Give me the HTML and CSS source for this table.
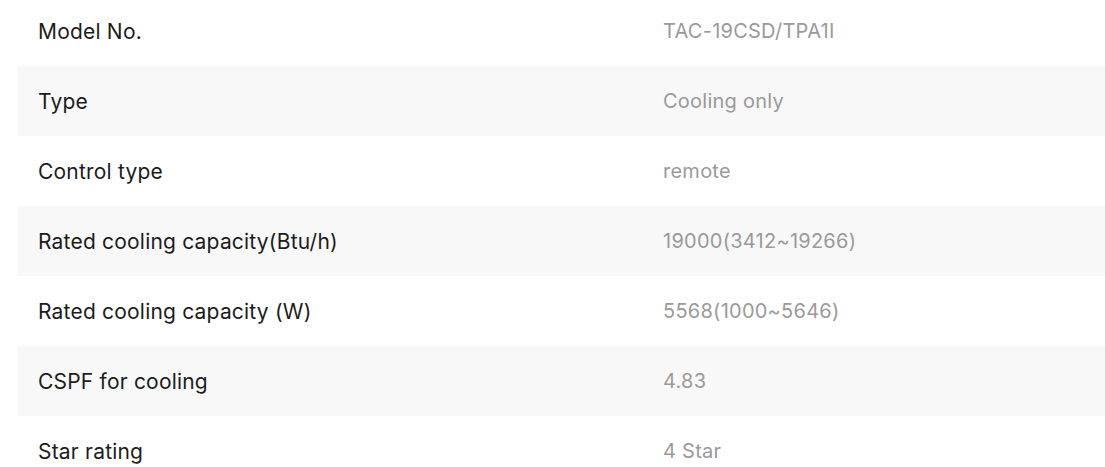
FILE: index.html
```html
<!DOCTYPE html>
<html lang="en">
<head>
  <meta charset="UTF-8">
  <title>Specifications</title>
  <link rel="stylesheet" href="styles.css">
</head>
<body>
  <div class="spec-table">
    <div class="spec-row">
      <div class="spec-name">Model No.</div>
      <div class="spec-value">TAC-19CSD/TPA1I</div>
    </div>
    <div class="spec-row">
      <div class="spec-name">Type</div>
      <div class="spec-value">Cooling only</div>
    </div>
    <div class="spec-row">
      <div class="spec-name">Control type</div>
      <div class="spec-value">remote</div>
    </div>
    <div class="spec-row">
      <div class="spec-name">Rated cooling capacity(Btu/h)</div>
      <div class="spec-value">19000(3412~19266)</div>
    </div>
    <div class="spec-row">
      <div class="spec-name">Rated cooling capacity (W)</div>
      <div class="spec-value">5568(1000~5646)</div>
    </div>
    <div class="spec-row">
      <div class="spec-name">CSPF for cooling</div>
      <div class="spec-value">4.83</div>
    </div>
    <div class="spec-row">
      <div class="spec-name">Star rating</div>
      <div class="spec-value">4 Star</div>
    </div>
  </div>
</body>
</html>
```

FILE: styles.css
```css
body {
  margin: 0;
  background: #fff;
  overflow: hidden;
  font-family: Inter, "Noto Sans", sans-serif;
}

.spec-table {
  margin: -4px 0 0 18px;
  width: 1250px;
}

.spec-row {
  display: flex;
  align-items: center;
  height: 70px;
}

.spec-row:nth-child(even) {
  background-color: #f8f8f8;
}

.spec-name {
  width: 625px;
  padding-left: 20px;
  box-sizing: border-box;
  font-size: 21px;
  letter-spacing: 0.2px;
  color: #1c1c1c;
}

.spec-value {
  padding-left: 20px;
  font-size: 20px;
  letter-spacing: 0.25px;
  color: #9a9a9a;
}
```
